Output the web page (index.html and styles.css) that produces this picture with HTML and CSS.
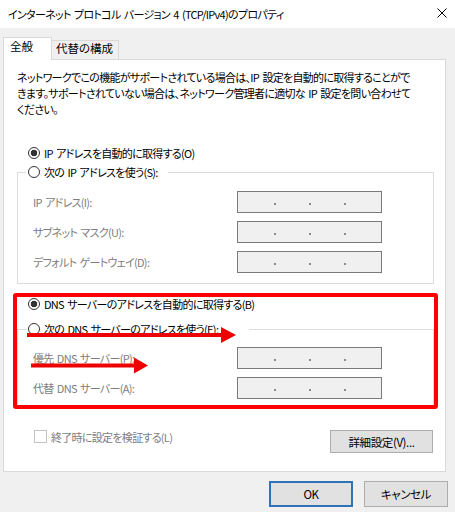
FILE: index.html
```html
<!DOCTYPE html>
<html lang="ja">
<head>
<meta charset="utf-8">
<title>インターネット プロトコル バージョン 4 (TCP/IPv4)のプロパティ</title>
<link rel="stylesheet" href="styles.css">
</head>
<body>
<div class="window">
  <div class="titlebar">
    <span class="title">インターネット プロトコル バージョン 4 (TCP/IPv4)のプロパティ</span>
    <svg class="close" width="10" height="10" viewBox="0 0 10 10"><path d="M0.5 0.5 L9.5 9.5 M9.5 0.5 L0.5 9.5" stroke="#000" stroke-width="1" fill="none"/></svg>
  </div>
  <div class="tabs">
    <div class="tab active">全般</div>
    <div class="tab">代替の構成</div>
  </div>
  <div class="panel">
    <p class="desc">ネットワークでこの機能がサポートされている場合は、IP 設定を自動的に取得することがで<br>きます。サポートされていない場合は、ネットワーク管理者に適切な IP 設定を問い合わせて<br>ください。</p>
    <div class="radio-row first"><span class="radio checked"></span>IP アドレスを自動的に取得する(O)</div>
    <fieldset class="group g1">
      <legend class="legend"><span class="radio"></span>次の IP アドレスを使う(S):</legend>
      <div class="field first-field"><span class="label">IP アドレス(I):</span><span class="ipbox"><i></i><i></i><i></i></span></div>
      <div class="field"><span class="label">サブネット マスク(U):</span><span class="ipbox"><i></i><i></i><i></i></span></div>
      <div class="field"><span class="label">デフォルト ゲートウェイ(D):</span><span class="ipbox"><i></i><i></i><i></i></span></div>
    </fieldset>
    <div class="radio-row dns"><span class="radio checked"></span>DNS サーバーのアドレスを自動的に取得する(B)</div>
    <fieldset class="group g2">
      <legend class="legend wide"><span class="radio"></span>次の DNS サーバーのアドレスを使う(E):</legend>
      <div class="field first-field2"><span class="label">優先 DNS サーバー(P):</span><span class="ipbox"><i></i><i></i><i></i></span></div>
      <div class="field"><span class="label">代替 DNS サーバー(A):</span><span class="ipbox"><i></i><i></i><i></i></span></div>
    </fieldset>
    <div class="bottom-row">
      <div class="check"><span class="box"></span>終了時に設定を検証する(L)</div>
      <button class="btn adv">詳細設定(V)...</button>
    </div>
  </div>
  <div class="actions">
    <button class="btn ok">OK</button>
    <button class="btn cancel">キャンセル</button>
  </div>
  <svg class="annot" width="455" height="512" viewBox="0 0 455 512">
    <rect x="15" y="295" width="421" height="112" rx="1" fill="none" stroke="#ff0000" stroke-width="4"/>
    <path d="M27 335 L223 335" stroke="#ee0000" stroke-width="4" fill="none"/>
    <polygon points="221,327 236,335 221,343" fill="#ee0000"/>
    <path d="M31 365.5 L136 365.5" stroke="#ee0000" stroke-width="4" fill="none"/>
    <polygon points="134,357.5 148,365.5 134,373.5" fill="#ee0000"/>
  </svg>
</div>
</body>
</html>
```
FILE: styles.css
```css
html, body {
  margin: 0;
  padding: 0;
}
body {
  background: #f0f0f0;
  font-family: "Noto Sans CJK JP", "Noto Sans", sans-serif;
  font-size: 11px;
  letter-spacing: -0.7px;
  word-spacing: 1.5px;
  font-feature-settings: "palt";
  color: #000;
}
.window {
  position: relative;
  width: 455px;
  height: 512px;
  background: #f0f0f0;
  overflow: hidden;
}
.titlebar {
  height: 28px;
  background: #fff;
  display: flex;
  align-items: center;
  justify-content: space-between;
  padding: 0 8px 0 8px;
}
.title {
  line-height: 16px;
  white-space: nowrap;
}
.close {
  display: block;
  margin-top: -2px;
}
.tabs {
  display: flex;
  align-items: flex-end;
  margin: 9px 0 0 3px;
}
.tab {
  box-sizing: border-box;
  white-space: nowrap;
  font-size: 11.5px;
  letter-spacing: 0;
}
.tab.active {
  position: relative;
  z-index: 1;
  width: 49px;
  height: 23px;
  margin-bottom: -1px;
  background: #fff;
  border: 1px solid #d9d9d9;
  border-bottom: none;
  padding-left: 6px;
  line-height: 16px;
}
.tab:not(.active) {
  width: 67px;
  height: 19px;
  background: #f0f0f0;
  border: 1px solid #d9d9d9;
  border-left: none;
  border-bottom: none;
  padding-left: 4px;
  line-height: 14px;
}
.panel {
  box-sizing: border-box;
  width: 443px;
  margin-left: 3px;
  background: #fff;
  border: 1px solid #d9d9d9;
  padding-bottom: 18px;
}
.desc {
  margin: 9px 0 0 13px;
  line-height: 16px;
  white-space: nowrap;
}
.radio-row {
  display: flex;
  align-items: center;
  height: 16px;
  margin-left: 24px;
  white-space: nowrap;
}
.radio-row.first {
  margin-top: 28px;
}
.radio-row.dns {
  margin-top: 12px;
}
.radio {
  box-sizing: border-box;
  width: 12px;
  height: 12px;
  border: 1px solid #333;
  border-radius: 50%;
  margin-right: 4px;
  flex: none;
  background: #fff;
}
.radio.checked {
  background: radial-gradient(circle, #333 0, #333 3px, #fff 3.6px);
}
.group {
  box-sizing: border-box;
  width: 417px;
  margin: 0 0 0 13px;
  border: 1px solid #dcdcdc;
  padding: 0 51px 0 8px;
  min-width: 0;
}
.g1 {
  margin-top: 3px;
  padding-bottom: 10px;
}
.g2 {
  margin-top: 9px;
  padding-bottom: 6px;
}
.legend {
  display: flex;
  align-items: center;
  height: 16px;
  padding: 0 10px 0 2px;
  white-space: nowrap;
}
.legend.wide {
  padding-right: 31px;
}
.field {
  display: flex;
  align-items: center;
  justify-content: space-between;
  height: 22px;
  margin: 8px 0 0 7px;
}
.field.first-field {
  margin-top: 11px;
}
.field.first-field2 {
  margin-top: 10px;
}
.label {
  color: #7d7d7d;
  white-space: nowrap;
}
.ipbox {
  box-sizing: border-box;
  width: 145px;
  height: 22px;
  border: 1px solid #7a7a7a;
  background: #f0f0f0;
  display: flex;
  align-items: center;
  padding-left: 36px;
  gap: 33px;
}
.ipbox i {
  display: block;
  width: 2px;
  height: 2px;
  background: #8a8a8a;
  margin-top: 4px;
}
.bottom-row {
  display: flex;
  justify-content: space-between;
  align-items: flex-start;
  margin: 24px 12px 0 30px;
}
.check {
  display: flex;
  align-items: center;
  height: 13px;
  color: #7d7d7d;
  white-space: nowrap;
}
.box {
  box-sizing: border-box;
  width: 13px;
  height: 13px;
  border: 1px solid #c4c4c4;
  background: #fff;
  margin-right: 4px;
}
.btn {
  box-sizing: border-box;
  font-family: inherit;
  font-size: 11.5px;
  letter-spacing: -0.4px;
  font-feature-settings: "palt";
  background: #e1e1e1;
  border: 1px solid #adadad;
  color: #000;
  padding: 0;
  margin: 0;
  white-space: nowrap;
}
.btn.adv {
  width: 103px;
  height: 23px;
}
.actions {
  display: flex;
  justify-content: flex-end;
  gap: 11px;
  margin-top: 9px;
  padding-right: 7px;
}
.btn.ok, .btn.cancel {
  width: 84px;
  height: 26px;
}
.btn.ok {
  border: 2px solid #2e73b5;
}
.annot {
  position: absolute;
  top: 0;
  left: 0;
  pointer-events: none;
}
```
